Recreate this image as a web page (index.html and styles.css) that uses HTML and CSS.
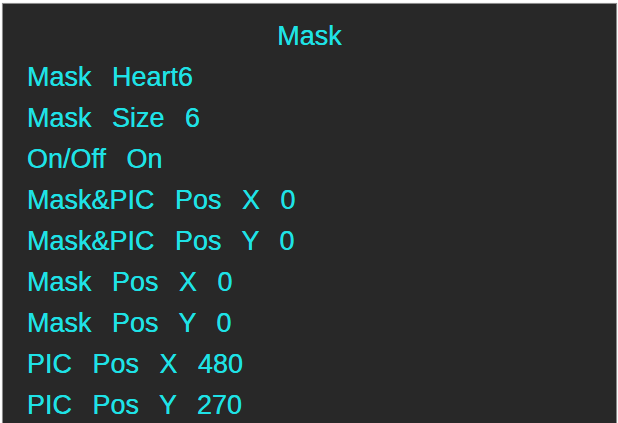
FILE: index.html
```html
<!DOCTYPE html>
<html lang="en">
<head>
<meta charset="utf-8">
<title>Mask</title>
<link rel="stylesheet" href="styles.css">
</head>
<body>
<div class="panel">
  <div class="title">Mask</div>
  <ul class="menu">
    <li>Mask Heart6</li>
    <li>Mask Size 6</li>
    <li>On/Off On</li>
    <li>Mask&amp;PIC Pos X 0</li>
    <li>Mask&amp;PIC Pos Y 0</li>
    <li>Mask Pos X 0</li>
    <li>Mask Pos Y 0</li>
    <li>PIC Pos X 480</li>
    <li>PIC Pos Y 270</li>
  </ul>
</div>
</body>
</html>
```

FILE: styles.css
```css
html, body {
  margin: 0;
  padding: 0;
  background: #ffffff;
  overflow: hidden;
  height: 423px;
}
.panel {
  margin: 3px 1px 0 2px;
  border: 1px solid #8c8c8c;
  box-shadow: 0 0 1px #cfcfcf;
  background: #282828;
  height: 480px;
  padding: 12px 0 0 24px;
  font-family: "Liberation Sans", Arial, sans-serif;
  font-size: 27px;
  line-height: 41px;
  color: #1fe2e6;
  text-shadow: 0 0 0.6px #1fe2e6;
  word-spacing: 13px;
}
.title {
  text-align: center;
  margin-left: -24px;
}
.menu {
  list-style: none;
  margin: 0;
  padding: 0;
}
```
